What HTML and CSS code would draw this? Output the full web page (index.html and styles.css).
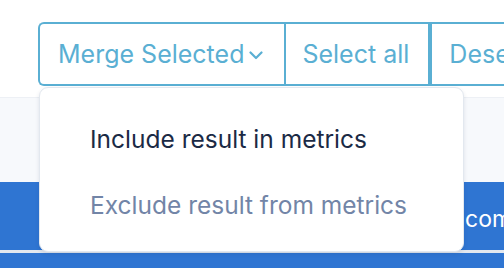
FILE: index.html
```html
<!DOCTYPE html>
<html lang="en">
<head>
    <meta charset="UTF-8">
    <meta name="viewport" content="width=device-width, initial-scale=1.0">
    <title>Results</title>
    <link rel="stylesheet" href="styles.css">
</head>
<body>
    <div class="page">
        <div class="toolbar">
            <div class="btn-group">
                <button class="btn btn-merge">
                    Merge Selected
                    <svg class="chevron" width="14" height="10" viewBox="0 0 14 10">
                        <path d="M1.5 2.5 L7 8 L12.5 2.5" fill="none" stroke="currentColor" stroke-width="2.2" stroke-linecap="round" stroke-linejoin="round"/>
                    </svg>
                </button>
                <button class="btn btn-select">Select all</button>
                <button class="btn btn-deselect">Deselect all</button>
            </div>

            <!-- dropdown for merge selected -->
            <div class="dropdown">
                <div class="dropdown-item">Include result in metrics</div>
                <div class="dropdown-item muted">Exclude result from metrics</div>
            </div>
        </div>

        <div class="content">
            <div class="spacer"></div>
            <div class="banner"><span class="banner-text">compare</span></div>
            <div class="banner banner-next"></div>
        </div>
    </div>
</body>
</html>
```

FILE: styles.css
```css
body {
    margin: 0;
    padding: 0;
    font-family: Inter, Lato, sans-serif;
    background-color: white;
    overflow: hidden;
}

.page {
    width: 504px;
    height: 268px;
    position: relative;
    overflow: hidden;
}

.toolbar {
    height: 97px;
    padding: 22px 0 0 38px;
    box-sizing: border-box;
    position: relative;
}

.btn-group {
    display: flex;
    height: 64px;
    width: max-content;
    border: 2px solid #5aafd3;
    border-right: none;
    border-radius: 6px 0 0 6px;
    box-sizing: border-box;
}

.btn {
    display: flex;
    align-items: center;
    background: none;
    border: none;
    font-family: inherit;
    font-size: 25px;
    color: #5aafd3;
    padding: 0 19px 0 18px;
    cursor: pointer;
    white-space: nowrap;
}

.btn-merge {
    border-right: 2px solid #5aafd3;
    padding-right: 21px;
}

.chevron {
    margin-left: 5px;
    margin-top: 2px;
}

.btn-select {
    border-right: 2px solid #5aafd3;
    padding-left: 16px;
}

.btn-deselect {
    border-left: 2px solid #5aafd3;
    padding-left: 17px;
}

.dropdown {
    position: absolute;
    top: 87px;
    left: 39px;
    width: 425px;
    height: 165px;
    box-sizing: border-box;
    background-color: white;
    border: 1px solid #e3e8ef;
    border-radius: 9px;
    box-shadow: 0 2px 4px rgba(30, 50, 80, 0.12);
    padding-top: 36px;
    z-index: 10;
}

.dropdown-item {
    padding-left: 50px;
    height: 66px;
    font-size: 24.5px;
    color: #1b2a45;
}

.dropdown-item.muted {
    color: #7285a7;
}

.content {
    background-color: #f7f9fc;
    border-top: 1px solid #edf0f5;
}

.spacer {
    height: 84px;
}

.banner {
    background-color: #2f75d2;
    height: 68px;
    display: flex;
    align-items: center;
    border-bottom: 3px solid #e3e8ef;
}

.banner-next {
    height: 20px;
    border-bottom: none;
}

.banner-text {
    color: white;
    font-size: 23px;
    padding-left: 465px;
    padding-top: 5px;
    white-space: nowrap;
}
```
